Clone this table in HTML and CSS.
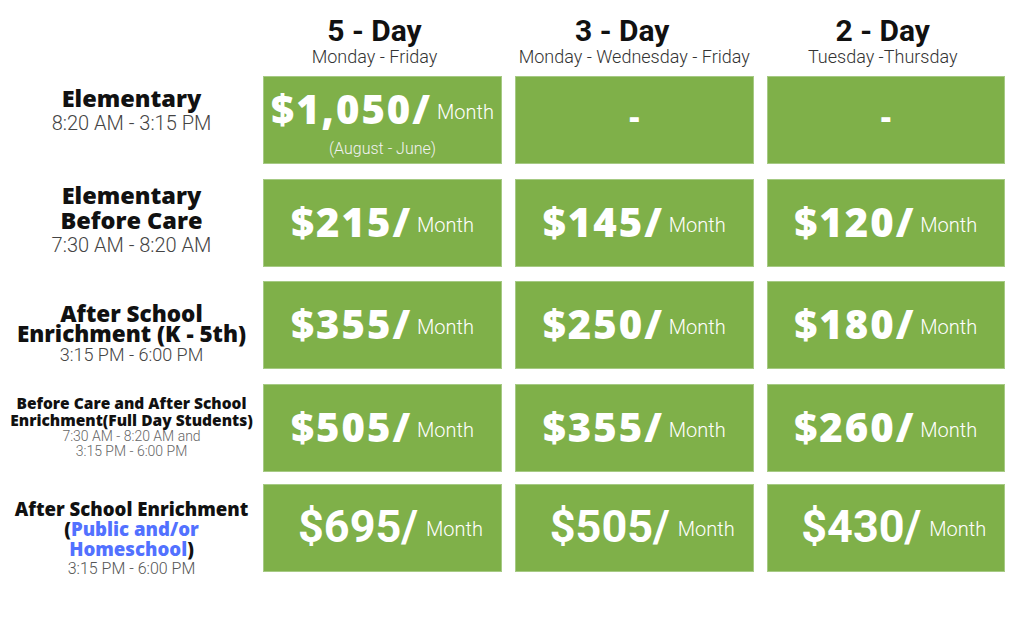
FILE: index.html
```html
<!DOCTYPE html>
<html lang="en">
<head>
<meta charset="utf-8">
<title>Tuition Rates</title>
<link rel="stylesheet" href="styles.css">
</head>
<body>
<div class="table">
  <div class="corner"></div>
  <div class="head h1"><div class="title">5 - Day</div><div class="sub">Monday - Friday</div></div>
  <div class="head h2"><div class="title">3 - Day</div><div class="sub">Monday - Wednesday - Friday</div></div>
  <div class="head h3"><div class="title">2 - Day</div><div class="sub">Tuesday -Thursday</div></div>

  <div class="label l1">
    <div class="name">Elementary</div>
    <div class="time">8:20 AM - 3:15 PM</div>
  </div>
  <div class="cell first">
    <div class="price">$1,050/<span class="per">Month</span></div>
    <div class="note">(August - June)</div>
  </div>
  <div class="cell"><div class="price dash">-</div></div>
  <div class="cell"><div class="price dash">-</div></div>

  <div class="label l2">
    <div class="name">Elementary</div>
    <div class="name">Before Care</div>
    <div class="time">7:30 AM - 8:20 AM</div>
  </div>
  <div class="cell"><div class="price">$215/<span class="per">Month</span></div></div>
  <div class="cell"><div class="price">$145/<span class="per">Month</span></div></div>
  <div class="cell"><div class="price">$120/<span class="per">Month</span></div></div>

  <div class="label l3">
    <div class="name">After School</div>
    <div class="name">Enrichment (K - 5th)</div>
    <div class="time">3:15 PM - 6:00 PM</div>
  </div>
  <div class="cell"><div class="price">$355/<span class="per">Month</span></div></div>
  <div class="cell"><div class="price">$250/<span class="per">Month</span></div></div>
  <div class="cell"><div class="price">$180/<span class="per">Month</span></div></div>

  <div class="label l4">
    <div class="name">Before Care and After School</div>
    <div class="name">Enrichment(Full Day Students)</div>
    <div class="time">7:30 AM - 8:20 AM and</div>
    <div class="time">3:15 PM - 6:00 PM</div>
  </div>
  <div class="cell"><div class="price">$505/<span class="per">Month</span></div></div>
  <div class="cell"><div class="price">$355/<span class="per">Month</span></div></div>
  <div class="cell"><div class="price">$260/<span class="per">Month</span></div></div>

  <div class="label l5">
    <div class="name">After School Enrichment</div>
    <div class="name">(<span class="blue">Public and/or</span></div>
    <div class="name"><span class="blue">Homeschool</span>)</div>
    <div class="time">3:15 PM - 6:00 PM</div>
  </div>
  <div class="cell alt"><div class="price">$695/<span class="per">Month</span></div></div>
  <div class="cell alt"><div class="price">$505/<span class="per">Month</span></div></div>
  <div class="cell alt"><div class="price">$430/<span class="per">Month</span></div></div>
</div>
</body>
</html>
```

FILE: styles.css
```css
html, body {
  margin: 0;
  padding: 0;
  background: #ffffff;
}

body {
  width: 1024px;
  height: 621px;
  overflow: hidden;
  font-family: "Open Sans", "Liberation Sans", sans-serif;
}

.table {
  display: grid;
  grid-template-columns: 250px 239px 238.5px 238.5px;
  grid-template-rows: 76px 103px 102px 103px 100px 88px;
  column-gap: 13px;
}

/* column headings */
.head {
  align-self: start;
  padding-top: 15px;
  text-align: center;
  white-space: nowrap;
}
.title {
  font-family: Roboto, "Liberation Sans", sans-serif;
  font-weight: 700;
  font-size: 30px;
  line-height: 32px;
  color: #111;
}
.sub {
  font-family: Roboto, "Liberation Sans", sans-serif;
  font-weight: 300;
  font-size: 18px;
  line-height: 20px;
  color: #333;
}
.h1 { padding-right: 16px; }
.h2 .title { padding-right: 24px; }
.h3 { padding-right: 6px; }

/* row labels (span the gap so they centre on x = 131) */
.label {
  align-self: start;
  margin-right: -13px;
  text-align: center;
  white-space: nowrap;
}
.name {
  font-family: "Open Sans", "Liberation Sans", sans-serif;
  font-weight: 800;
  color: #111;
}
.time {
  font-family: Roboto, "Liberation Sans", sans-serif;
  font-weight: 300;
  color: #444;
}
.blue { color: #5271ff; }

.l1 { padding-top: 9px; }
.l1 .name { font-size: 23.5px; line-height: 26px; }
.l1 .time { font-size: 20px; line-height: 24px; }

.l2 { padding-top: 4px; }
.l2 .name { font-size: 23.5px; line-height: 25px; }
.l2 .time { font-size: 20px; line-height: 24px; }

.l3 { padding-top: 23px; }
.l3 .name { font-size: 22.5px; line-height: 20px; }
.l3 .time { font-size: 18px; line-height: 21px; }

.l4 { padding-top: 11px; }
.l4 .name { font-size: 15.5px; line-height: 17px; }
.l4 .time { font-size: 14px; line-height: 15px; color: #666; }

.l5 { padding-top: 15px; }
.l5 .name { font-size: 18.6px; line-height: 20px; }
.l5 .time { font-size: 16px; line-height: 19px; color: #555; }

/* price cells */
.cell {
  align-self: start;
  height: 88px;
  box-sizing: border-box;
  background: #7fb049;
  border: 1px solid #a6ca84;
  display: flex;
  flex-direction: column;
  align-items: center;
  justify-content: center;
  color: #ffffff;
}
.first { padding-top: 4px; }

.price {
  font-family: "Open Sans", "Liberation Sans", sans-serif;
  font-weight: 800;
  font-size: 40px;
  line-height: 44px;
  letter-spacing: 2px;
  white-space: nowrap;
}
.per {
  font-family: Roboto, "Liberation Sans", sans-serif;
  font-weight: 300;
  font-size: 20px;
  letter-spacing: 0;
  margin-left: 5px;
  vertical-align: 5px;
}
.note {
  font-family: Roboto, "Liberation Sans", sans-serif;
  font-weight: 300;
  font-size: 16px;
  line-height: 18px;
  margin-top: 6px;
  color: #f2f2f2;
}
.dash {
  font-size: 32px;
  letter-spacing: 0;
  padding-bottom: 9px;
}

.alt { padding-left: 16px; }
.alt .price {
  font-family: Roboto, "Liberation Sans", sans-serif;
  font-weight: 700;
  font-size: 45px;
  letter-spacing: 0;
}
.alt .per { margin-left: 8px; vertical-align: 6px; }
```
